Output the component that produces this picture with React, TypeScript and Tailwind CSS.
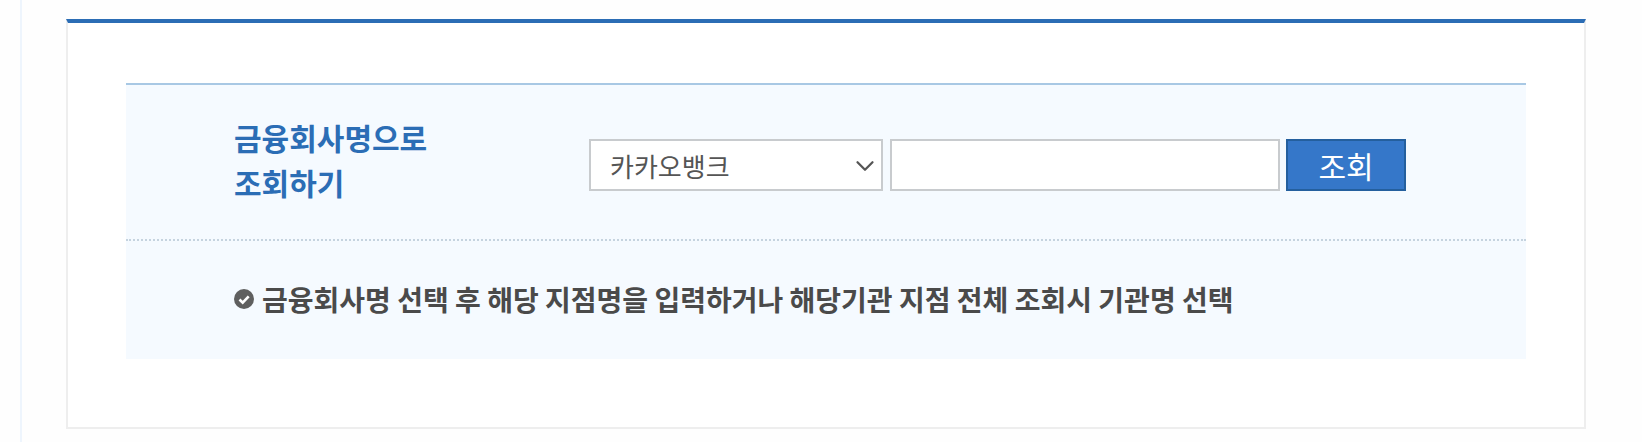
import React from 'react';
import { ChevronDown } from 'lucide-react';

const App: React.FC = () => {
    return (
        <div className="h-[442px] overflow-hidden bg-[#fefefe] pl-[20px] font-['Noto_Sans_CJK_KR','Noto_Sans',sans-serif]">
            <div className="h-full border-l-2 border-[#eef5fd] pl-[44px] pt-[19px]">
                {/* Card */}
                <div className="box-border h-[410px] w-[1520px] border-x-2 border-b-2 border-t-4 border-x-[#eeeeee] border-b-[#eeeeee] border-t-[#2b6db5] bg-white px-[58px] pt-[60px]">
                    <div className="border-t-2 border-[#a8c8e4] bg-[#f5faff]">
                        {/* Search row */}
                        <div className="flex h-[156px] items-center border-b-2 border-dotted border-[#c5d3df] pl-[108px]">
                            <h2 className="-mt-[4px] w-[355px] text-[30px] leading-[45px] font-bold text-[#2b6db5]">
                                금융회사명으로
                                <br />
                                조회하기
                            </h2>
                            <div className="mt-[6px] flex">
                                <div className="relative h-[52px] w-[294px]">
                                    <select
                                        defaultValue="카카오뱅크"
                                        className="h-full w-full appearance-none rounded-none border-2 border-[#c8cbce] bg-white pl-[19px] text-[26px] text-[#555555] outline-none"
                                    >
                                        <option>카카오뱅크</option>
                                    </select>
                                    <ChevronDown className="pointer-events-none absolute top-[12px] right-[3px] h-[30px] w-[30px] text-[#555555]" strokeWidth={1.8} />
                                </div>
                                <input type="text" className="ml-[7px] h-[52px] w-[390px] rounded-none border-2 border-[#c8cbce] bg-white outline-none" />
                                <button className="ml-[6px] h-[52px] w-[120px] border-2 border-[#245f9e] bg-[#3577c9] text-[30px] leading-none text-white">
                                    조회
                                </button>
                            </div>
                        </div>
                        {/* Notice */}
                        <div className="flex h-[118px] items-center pb-[2px] pl-[107px]">
                            <svg viewBox="0 0 22 22" className="mr-[7px] h-[22px] w-[22px] shrink-0">
                                <circle cx="11" cy="11" r="10" fill="#5f5f5f" />
                                <path d="M6.5 11.5l3.2 3.2 6-6.4" fill="none" stroke="#ffffff" strokeWidth="2.6" />
                            </svg>
                            <p className="text-[28px] font-bold whitespace-nowrap text-[#4a4a4a]">
                                금융회사명 선택 후 해당 지점명을 입력하거나 해당기관 지점 전체 조회시 기관명 선택
                            </p>
                        </div>
                    </div>
                </div>
            </div>
        </div>
    );
};

export default App;
